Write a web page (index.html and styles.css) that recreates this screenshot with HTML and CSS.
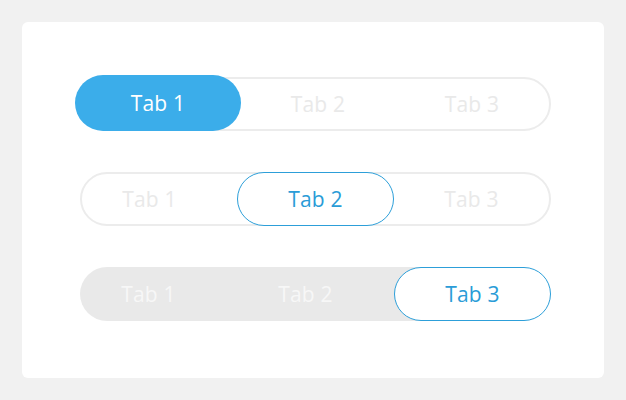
FILE: index.html
```html
<!DOCTYPE html>
<html lang="en">

<head>
    <meta charset="UTF-8">
    <meta name="viewport" content="width=device-width, initial-scale=1.0">
    <title>Tabs</title>
    <link rel="stylesheet" href="styles.css">
</head>

<body>
    <div class="card">
        <div class="tabs tabs--filled">
            <div class="tabs__item tabs__item--active">Tab 1</div>
            <div class="tabs__item">Tab 2</div>
            <div class="tabs__item">Tab 3</div>
        </div>

        <div class="tabs tabs--outline">
            <div class="tabs__item tabs__item--before">Tab 1</div>
            <div class="tabs__item tabs__item--active">Tab 2</div>
            <div class="tabs__item">Tab 3</div>
        </div>

        <div class="tabs tabs--grey">
            <div class="tabs__item tabs__item--before">Tab 1</div>
            <div class="tabs__item tabs__item--before">Tab 2</div>
            <div class="tabs__item tabs__item--active">Tab 3</div>
        </div>
    </div>
</body>

</html>
```

FILE: styles.css
```css
* {
    margin: 0;
    padding: 0;
    box-sizing: border-box;
}

body {
    background: #f1f1f1;
    font-family: "Open Sans", "Liberation Sans", sans-serif;
}

.card {
    margin: 22px;
    width: 582px;
    height: 356px;
    background: #fff;
    border-radius: 6px;
    display: flex;
    flex-direction: column;
    gap: 41px;
    padding: 55px 0 0 58px;
}

.tabs {
    display: flex;
    width: 471px;
    height: 54px;
    border-radius: 27px;
}

.tabs__item {
    flex: 1;
    display: flex;
    align-items: center;
    justify-content: center;
    font-size: 21px;
    color: #e9e9e9;
    letter-spacing: 0.2px;
}

.tabs__item--before {
    padding-right: 20px;
}

/* first row: solid blue pill */
.tabs--filled {
    border: 2px solid #ececec;
}

.tabs--filled .tabs__item--active {
    flex: none;
    width: 166px;
    height: 56px;
    margin: -4px 0 0 -7px;
    border-radius: 28px;
    background: #3badea;
    color: #fff;
}

/* second row: outlined pill */
.tabs--outline {
    border: 2px solid #ececec;
}

.tabs--outline .tabs__item--before {
    flex: none;
    width: 155px;
}

.tabs--outline .tabs__item--active {
    flex: none;
    width: 157px;
    height: 54px;
    margin-top: -2px;
    border: 1.5px solid #2d9fd9;
    border-radius: 27px;
    background: #fff;
    color: #2a9cd7;
}

/* third row: grey track */
.tabs--grey {
    background: linear-gradient(90deg, #e9e9e9 340px, transparent 340px);
}

.tabs--grey .tabs__item {
    color: #f7f7f7;
}

.tabs--grey .tabs__item--active {
    flex: none;
    width: 157px;
    border: 1.5px solid #2d9fd9;
    border-radius: 27px;
    background: #fff;
    color: #2a9cd7;
}
```
